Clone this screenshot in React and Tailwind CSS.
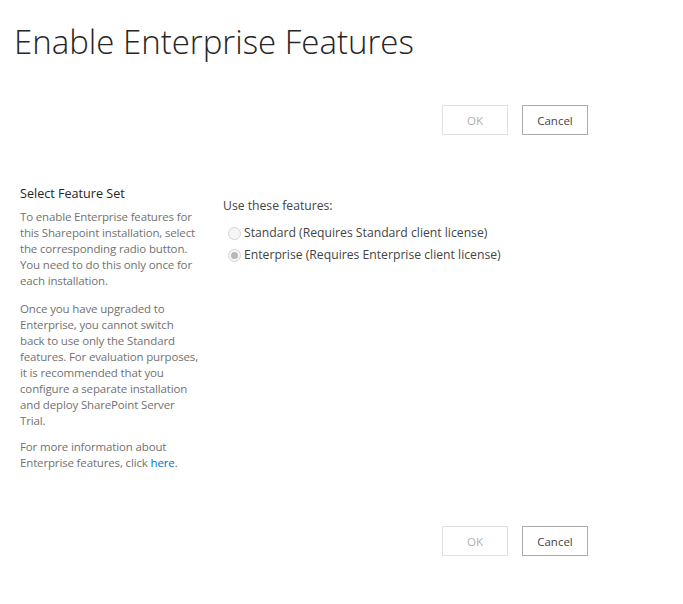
function Buttons() {
  return (
    <div className="flex justify-end gap-[14px] pr-[95px]">
      <button disabled className="w-[66px] h-[30px] pt-[1px] border border-[#e1e1e1] bg-white text-[#b1b1b1] text-[11.5px]">
        OK
      </button>
      <button className="w-[66px] h-[30px] pt-[1px] border border-[#ababab] bg-white text-[#444] text-[11.5px]">
        Cancel
      </button>
    </div>
  )
}

function Radio({ checked, label }) {
  return (
    <label className="flex items-center gap-[3px] h-[22px] text-[12.2px] text-[#444]">
      <span className="ml-[5px] w-[13px] h-[13px] rounded-full border border-[#d4d4d4] bg-[#f5f5f5] flex items-center justify-center">
        {checked && <span className="w-[7px] h-[7px] rounded-full bg-[#b8b8b8]" />}
      </span>
      {label}
    </label>
  )
}

// lines broken as in the original page
const intro = [
  'To enable Enterprise features for',
  'this Sharepoint installation, select',
  'the corresponding radio button.',
  'You need to do this only once for',
  'each installation.',
]

const upgrade = [
  'Once you have upgraded to',
  'Enterprise, you cannot switch',
  'back to use only the Standard',
  'features. For evaluation purposes,',
  'it is recommended that you',
  'configure a separate installation',
  'and deploy SharePoint Server',
  'Trial.',
]

function Lines({ lines }) {
  return lines.map((l) => (
    <span key={l} className="block whitespace-nowrap">{l}</span>
  ))
}

export default function App() {
  return (
    <div className="w-[683px] h-[604px] bg-white font-['Open_Sans',sans-serif]">
      <h1 className="pl-[14px] pt-[19px] text-[33px] font-light leading-[46px] text-[#262626]">
        Enable Enterprise Features
      </h1>

      <div className="mt-[40px]">
        <Buttons />
      </div>

      <div className="flex mt-[50px]">
        {/* description column */}
        <div className="w-[203px] pl-[20px]">
          <h3 className="text-[12.6px] text-[#262626] leading-[18px] mb-[6px]">Select Feature Set</h3>
          <div className="text-[11.5px] leading-[16px] text-[#727272] tracking-[-0.15px]">
            <p><Lines lines={intro} /></p>
            <p className="mt-[12px]"><Lines lines={upgrade} /></p>
            <p className="mt-[10px]">
              <span className="block whitespace-nowrap">For more information about</span>
              <span className="block whitespace-nowrap">
                Enterprise features, click <a className="text-[#0072c6]">here</a>.
              </span>
            </p>
          </div>
        </div>

        {/* controls column */}
        <div className="pl-[20px] pt-[12px]">
          <p className="text-[12.2px] text-[#444] leading-[18px] mb-[7px]">Use these features:</p>
          <Radio label="Standard (Requires Standard client license)" />
          <Radio checked label="Enterprise (Requires Enterprise client license)" />
        </div>
      </div>

      <div className="mt-[55px]">
        <Buttons />
      </div>
    </div>
  )
}
